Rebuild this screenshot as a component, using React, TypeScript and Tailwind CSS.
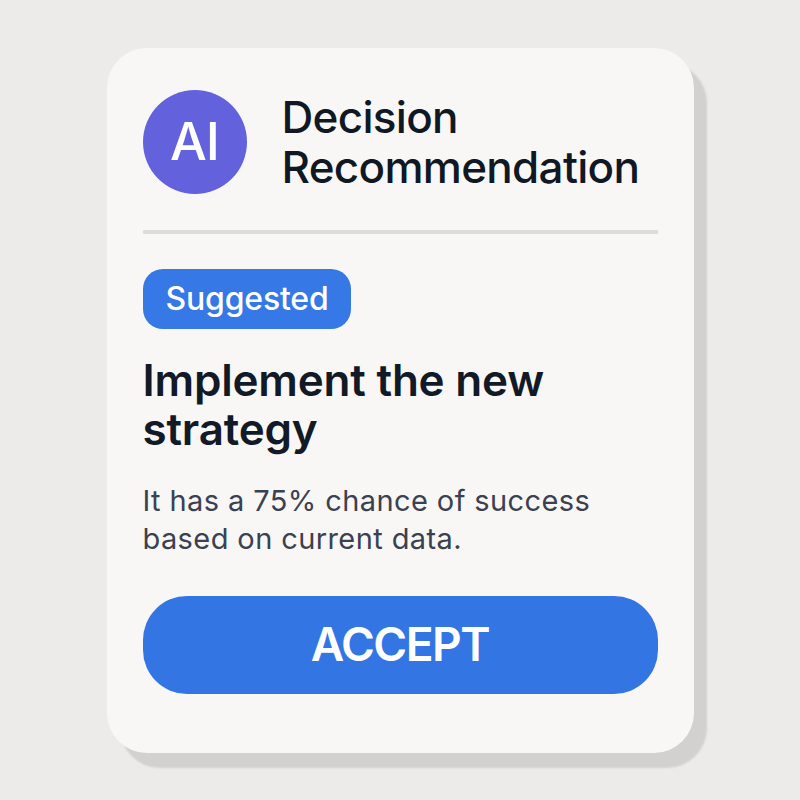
export default function App() {
  return (
    <div
      className="min-h-screen w-full flex items-center justify-center bg-[#ecebe9]"
      style={{ fontFamily: "Inter, 'Noto Sans', sans-serif" }}
    >
      <div className="w-[587px] h-[705px] rounded-[40px] bg-[#f9f7f5] shadow-[13px_15px_2px_#d3d1cf] px-[36px] pt-[42px] flex flex-col">
        {/* header */}
        <div className="flex items-center gap-[35px]">
          <div className="w-[104px] h-[104px] shrink-0 rounded-full bg-[#6461dc] flex items-center justify-center">
            <span className="text-white text-[52px] leading-none font-medium tracking-[-1px]">AI</span>
          </div>
          <h1 className="text-[44px] leading-[50px] font-medium text-[#0f1824] tracking-[-0.7px]">
            Decision
            <br />
            Recommendation
          </h1>
        </div>

        <div className="mt-[36px] h-[4px] bg-[#dedcda]" />

        <div className="mt-[35px]">
          <span className="inline-flex items-center h-[60px] px-[23px] rounded-[20px] bg-[#3578e6] text-white text-[32px] font-medium tracking-[-0.2px]">
            Suggested
          </span>
        </div>

        <h2 className="mt-[27px] text-[44px] leading-[49px] font-semibold text-[#111a26] tracking-[-0.2px]">
          Implement the new
          <br />
          strategy
        </h2>

        <p className="mt-[28px] text-[29px] leading-[38px] text-[#3a4150] tracking-[0.4px]">
          It has a 75% chance of success
          <br />
          based on current data.
        </p>

        <button
          type="button"
          className="mt-[38px] h-[98px] w-full rounded-[44px] bg-[#3275e3] text-white text-[46px] font-semibold tracking-[-1.5px]"
        >
          ACCEPT
        </button>
      </div>
    </div>
  );
}
